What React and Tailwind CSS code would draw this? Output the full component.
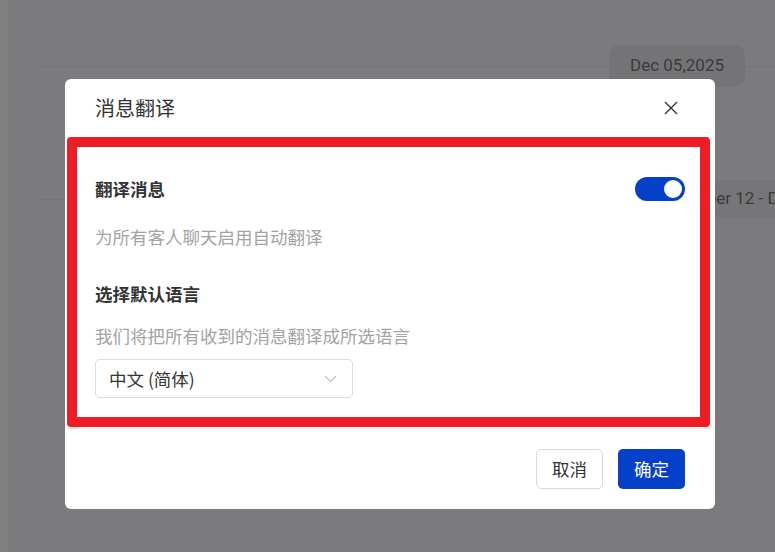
import React, { useState } from 'react';

const CloseIcon = () => (
  <svg width="14" height="14" viewBox="0 0 14 14" fill="none" stroke="#333" strokeWidth="1.4">
    <path d="M1 1L13 13M13 1L1 13" />
  </svg>
);

const Chevron = () => (
  <svg width="13" height="8" viewBox="0 0 13 8" fill="none" stroke="#bfbfbf" strokeWidth="1.1">
    <path d="M1 1L6.5 6.5L12 1" />
  </svg>
);

export default function App() {
  const [enabled, setEnabled] = useState(true);

  return (
    <div className="relative flex h-[552px] w-[775px] overflow-hidden bg-[#7b7b7d] font-['Noto_Sans_CJK_SC',sans-serif]">
      {/* page behind the overlay */}
      <div className="h-full w-[7px] border-r border-[#858587] bg-[#7f7f80]" />
      <div className="flex min-w-0 flex-1 flex-col overflow-hidden pl-[31px] font-['Roboto',sans-serif]">
        <div className="relative mt-[45px] flex h-[42px] items-center justify-end pr-[30px]">
          <div className="absolute inset-x-0 top-[21px] h-px bg-[#747477]" />
          <div className="relative flex h-[42px] items-center rounded-[10px] bg-[#747477] px-[21px] text-[17px] text-[#3a3a3c]">
            Dec 05,2025
          </div>
        </div>
        <div className="relative mt-[93px] flex h-[38px] items-center">
          <div className="absolute inset-x-0 top-[19px] h-px bg-[#747477]" />
          <div className="relative ml-[601px] flex h-[38px] shrink-0 items-center whitespace-nowrap rounded-l-[10px] bg-[#767679] pl-[14px] text-[17px] text-[#3a3a3c]">
            November 12 - Dec 18, 2025
          </div>
        </div>
      </div>

      {/* modal */}
      <div className="absolute left-[65px] top-[79px] flex w-[650px] flex-col rounded-[6px] bg-white">
        <div className="flex h-[59px] items-center justify-between border-b border-[#ececec] pl-[30px] pr-[37px]">
          <span className="text-[20px] leading-[28px] text-[#333]">消息翻译</span>
          <CloseIcon />
        </div>

        <div className="ml-[2px] mr-[5px] mt-[-1px] rounded-[4px] border-[10px] border-[#ee1c25] pb-[19px] pl-[18px] pr-[15px] pt-[30px]">
          <div className="flex h-[24px] items-center justify-between">
            <span className="text-[17.5px] font-bold leading-[24px] text-[#333]">翻译消息</span>
            <button
              onClick={() => setEnabled(!enabled)}
              className={`flex h-[24px] w-[50px] items-center rounded-full p-[3px] ${enabled ? 'justify-end bg-[#0540c8]' : 'justify-start bg-[#bfbfbf]'}`}
            >
              <span className="h-[18px] w-[18px] rounded-full bg-white" />
            </button>
          </div>
          <p className="mt-[24px] text-[17.5px] leading-[24px] text-[#a3a3a3]">为所有客人聊天启用自动翻译</p>

          <p className="mt-[33px] text-[17.5px] font-bold leading-[24px] text-[#333]">选择默认语言</p>
          <p className="mt-[18px] text-[17.5px] leading-[24px] text-[#a3a3a3]">我们将把所有收到的消息翻译成所选语言</p>

          <div className="mt-[11px] flex h-[39px] w-[258px] items-center justify-between rounded-[5px] border border-[#dcdcdc] pl-[13px] pr-[15px]">
            <span className="text-[17.5px] leading-[24px] text-[#333]">中文 (简体)</span>
            <Chevron />
          </div>
        </div>

        <div className="mt-[1px] flex h-[81px] items-center justify-end gap-[15px] border-t border-[#ececec] pr-[30px]">
          <button className="h-[40px] w-[67px] rounded-[5px] border border-[#d9d9d9] text-[17.5px] text-[#333]">取消</button>
          <button className="h-[40px] w-[67px] rounded-[5px] bg-[#0540c8] text-[17.5px] text-white">确定</button>
        </div>
      </div>
    </div>
  );
}
